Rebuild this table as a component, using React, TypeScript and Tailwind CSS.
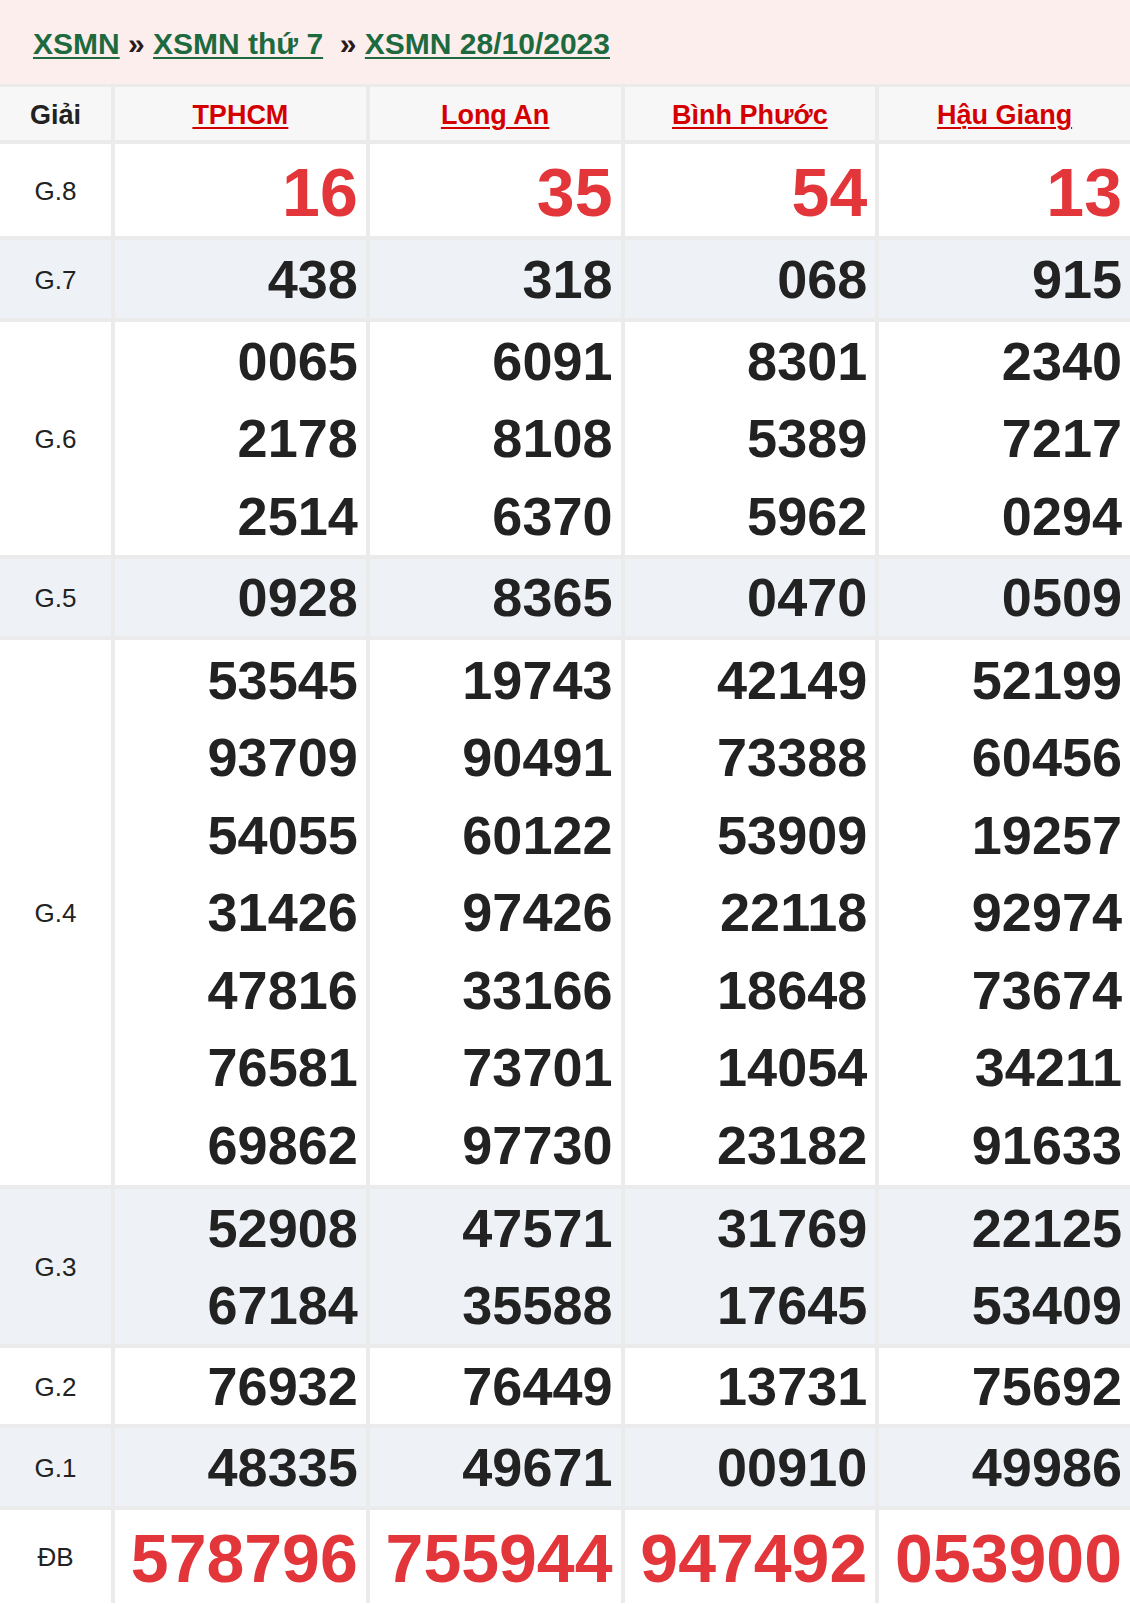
const provinces = ["TPHCM", "Long An", "Bình Phước", "Hậu Giang"];

type Row = { label: string; values: string[][]; red?: boolean; alt?: boolean; h: string };

const rows: Row[] = [
  { label: "G.8", values: [["16"], ["35"], ["54"], ["13"]], red: true, h: "h-[92px]" },
  { label: "G.7", values: [["438"], ["318"], ["068"], ["915"]], alt: true, h: "h-[78px]" },
  {
    label: "G.6",
    values: [
      ["0065", "2178", "2514"],
      ["6091", "8108", "6370"],
      ["8301", "5389", "5962"],
      ["2340", "7217", "0294"],
    ],
    h: "h-[233px]",
  },
  { label: "G.5", values: [["0928"], ["8365"], ["0470"], ["0509"]], alt: true, h: "h-[77px]" },
  {
    label: "G.4",
    values: [
      ["53545", "93709", "54055", "31426", "47816", "76581", "69862"],
      ["19743", "90491", "60122", "97426", "33166", "73701", "97730"],
      ["42149", "73388", "53909", "22118", "18648", "14054", "23182"],
      ["52199", "60456", "19257", "92974", "73674", "34211", "91633"],
    ],
    h: "h-[545px]",
  },
  {
    label: "G.3",
    values: [
      ["52908", "67184"],
      ["47571", "35588"],
      ["31769", "17645"],
      ["22125", "53409"],
    ],
    alt: true,
    h: "h-[155px]",
  },
  { label: "G.2", values: [["76932"], ["76449"], ["13731"], ["75692"]], h: "h-[76px]" },
  { label: "G.1", values: [["48335"], ["49671"], ["00910"], ["49986"]], alt: true, h: "h-[78px]" },
  { label: "ĐB", values: [["578796"], ["755944"], ["947492"], ["053900"]], red: true, h: "h-[93px]" },
];

function Cell({ children, alt }: { children: React.ReactNode; alt?: boolean }) {
  return <div className={alt ? "bg-[#eef2f7]" : "bg-white"}>{children}</div>;
}

export default function App() {
  return (
    <div className="w-[1130px] bg-white font-['Liberation_Sans',Arial,sans-serif] text-[#222]">
      <div className="flex h-[84px] items-center bg-[#fdeeee] pl-[33px] pt-[2px] text-[30px] font-bold">
        <a href="#" className="text-[#1d6a3f] underline decoration-2 underline-offset-[3px]">XSMN</a>
        <span className="whitespace-pre text-[#2a1a1a]"> » </span>
        <a href="#" className="text-[#1d6a3f] underline decoration-2 underline-offset-[3px]">XSMN thứ 7</a>
        <span className="whitespace-pre text-[#2a1a1a]">{"  » "}</span>
        <a href="#" className="text-[#1d6a3f] underline decoration-2 underline-offset-[3px]">XSMN 28/10/2023</a>
      </div>

      <div className="grid grid-cols-[111px_1fr_1fr_1fr_1fr] gap-[4px] border-t-[3px] border-[#ebebeb] bg-[#ebebeb]">
        <div className="flex h-[53px] items-center justify-center bg-[#f7f7f7] pt-[3px] text-[27px] font-bold">Giải</div>
        {provinces.map((p) => (
          <div key={p} className="flex h-[53px] items-center justify-center bg-[#f7f7f7] pt-[3px]">
            <a href="#" className="text-[27px] font-bold text-[#d40000] underline decoration-2 underline-offset-[3px]">
              {p}
            </a>
          </div>
        ))}

        {rows.map((row) => (
          <div key={row.label} className="contents">
            <Cell alt={row.alt}>
              <div className={`flex items-center justify-center pt-[2px] text-[26px] ${row.h}`}>{row.label}</div>
            </Cell>
            {row.values.map((vals, i) => (
              <Cell key={i} alt={row.alt}>
                <div
                  className={
                    row.red
                      ? `flex flex-col items-end justify-center pr-[8px] pt-[3px] text-[68px] font-bold leading-[80px] text-[#e2363a] ${row.h}`
                      : `flex flex-col items-end justify-center pr-[8px] pt-[1px] text-[54px] font-bold leading-[77.5px] text-[#222] ${row.h}`
                  }
                >
                  {vals.map((v, j) => (
                    <span key={j}>{v}</span>
                  ))}
                </div>
              </Cell>
            ))}
          </div>
        ))}
      </div>
    </div>
  );
}
